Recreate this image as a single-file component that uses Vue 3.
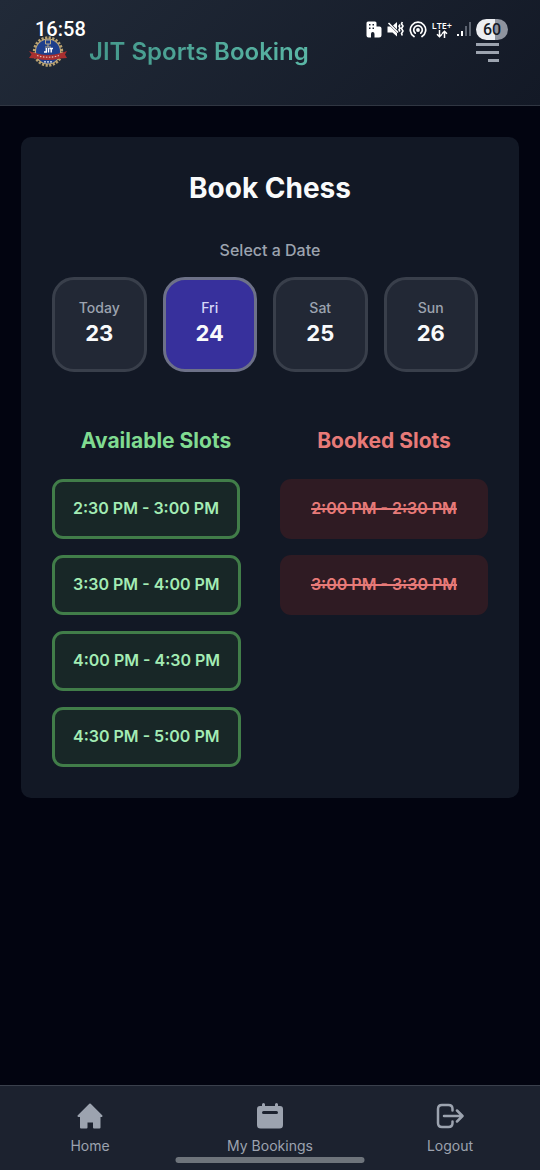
<script setup>
import { ref } from 'vue'

const dates = [
  { label: 'Today', day: 23 },
  { label: 'Fri', day: 24 },
  { label: 'Sat', day: 25 },
  { label: 'Sun', day: 26 },
]
const selected = ref(24)
const available = ['2:30 PM - 3:00 PM', '3:30 PM - 4:00 PM', '4:00 PM - 4:30 PM', '4:30 PM - 5:00 PM']
const booked = ['2:00 PM - 2:30 PM', '3:00 PM - 3:30 PM']
</script>

<template>
  <div class="app">
    <div class="status">
      <span class="clock">16:58</span>
      <div class="status-icons">
        <svg width="16" height="17" viewBox="0 0 16 17" aria-hidden="true">
          <path fill="#fff" fill-rule="evenodd" d="M2 0.500H9Q10.500 0.500 10.500 2V5.500H13.500Q15.500 5.500 15.500 7.500V14Q15.500 16.500 13 16.500H8.500V13Q8.500 11 6.700 11Q5 11 5 13V16.500H2.500Q0.500 16.500 0.500 14.500V2Q0.500 0.500 2 0.500ZM3 3V4.500H4.500V3ZM6.500 3V4.500H8V3ZM3 6.500V8H4.500V6.500ZM6.500 6.500V8H8V6.500Z" />
        </svg>
        <svg width="17" height="17" viewBox="0 0 17 17" aria-hidden="true">
          <path fill="#fff" d="M0.500 5.500H3.500L10 12V15.500L5.500 11.500H0.500ZM6 4.500L10 1V8.500Z" />
          <path stroke="#fff" stroke-width="1.600" d="M1.500 2L11 11.500" />
          <path fill="none" stroke="#fff" stroke-width="1.600" d="M13 3.500L12 5.200L13 7L12 8.800L13 10.500M15.300 1L14.500 3L16 5L14.500 7.500L16 10L14.500 12.500L15.300 14.500" />
        </svg>
        <svg width="18" height="17" viewBox="0 0 18 17" aria-hidden="true">
          <g fill="none" stroke="#fff" stroke-width="1.700" stroke-linecap="round">
            <path d="M5 15.500A7.700 7.700 0 1 1 13 15.500" />
            <path d="M6.200 12.200A4.300 4.300 0 1 1 11.800 12.200" />
          </g>
          <circle cx="9" cy="9" r="1.900" fill="#fff" />
        </svg>
        <span class="lte">
          <span>LTE+</span>
          <svg width="12" height="8" viewBox="0 0 12 8" aria-hidden="true">
            <path fill="none" stroke="#fff" stroke-width="1.500" d="M3.500 0V6.500M1 4.200L3.500 6.700L6 4.200M8.500 8V1.500M6 3.800L8.500 1.300L11 3.800" />
          </svg>
        </span>
        <svg width="14" height="16" viewBox="0 0 14 16" aria-hidden="true">
          <path fill="#fff" d="M0 13H2V15H0ZM4 10H6V15H4Z" />
          <path fill="#5c6370" d="M8 5H10V15H8ZM12 1H14V15H12Z" />
        </svg>
        <span class="battery">60</span>
      </div>
    </div>

    <header class="top">
      <svg class="logo" width="38" height="34" viewBox="0 0 38 34" aria-hidden="true">
        <circle cx="19" cy="16.500" r="13.700" fill="none" stroke="#b9a271" stroke-width="3" stroke-dasharray="2.200 1.400" />
        <circle cx="19" cy="16.500" r="13" fill="#c3ab78" />
        <circle cx="19" cy="16.500" r="12" fill="#1f3f8c" />
        <path fill="none" stroke="#b7a987" stroke-width="1" d="M16.500 5H21.500V9H16.500ZM19 9V12M16 12H22" />
        <path fill="none" stroke="#fff" stroke-width="1.400" d="M17.300 13V17H15M19.500 13V17.500M20.500 13.500H24M22.200 13.500V17.500" />
        <path fill="#a92f2f" d="M0 16L6 18Q19 22 32 18L38 16L36 19.500L38 23L31 23.500Q19 26.500 7 23.500L0 23L2.500 19.500Z" />
        <path fill="none" stroke="#e8b9b0" stroke-width="1.200" stroke-dasharray="1.500 1.500" d="M8 20.500Q19 24 30 20.500" />
        <path fill="none" stroke="#e5e7eb" stroke-width="1.200" stroke-dasharray="2 1" d="M15 26.800H23" />
      </svg>
      <h1>JIT Sports Booking</h1>
      <button class="menu" type="button" aria-label="Open menu">
        <span></span><span></span><span></span>
      </button>
    </header>

    <main>
      <section class="card">
        <h2>Book Chess</h2>
        <p class="prompt">Select a Date</p>
        <div class="dates">
          <button
            v-for="d in dates"
            :key="d.day"
            type="button"
            class="date"
            :class="{ active: d.day === selected }"
            :aria-pressed="d.day === selected"
            @click="selected = d.day"
          >
            <span>{{ d.label }}</span>
            <strong>{{ d.day }}</strong>
          </button>
        </div>
        <div class="columns">
          <section>
            <h3 class="green">Available Slots</h3>
            <div class="slots">
              <button v-for="s in available" :key="s" type="button" class="slot open">{{ s }}</button>
            </div>
          </section>
          <section>
            <h3 class="red">Booked Slots</h3>
            <div class="slots">
              <div v-for="s in booked" :key="s" class="slot taken">{{ s }}</div>
            </div>
          </section>
        </div>
      </section>
    </main>

    <nav class="bottom">
      <a href="#home">
        <svg width="26" height="26" viewBox="0 0 26 26" aria-hidden="true">
          <path fill="currentColor" stroke="currentColor" stroke-width="2" stroke-linejoin="round" d="M13 1.500L24.500 13H22.500V24.500H17V18.500H9.500V24.500H4V13H1.500Z" />
        </svg>
        <span>Home</span>
      </a>
      <a href="#bookings">
        <svg width="26" height="26" viewBox="0 0 26 26" aria-hidden="true">
          <path fill="currentColor" fill-rule="evenodd" d="M5 1.500Q5 0 6.500 0Q8 0 8 1.500V3H18V1.500Q18 0 19.500 0Q21 0 21 1.500V3H23Q26 3 26 6V22Q26 25.500 22.500 25.500H3.500Q0 25.500 0 22V6Q0 3 3 3H5ZM6.500 8Q5 8 5 9.500Q5 11 6.500 11H19.500Q21 11 21 9.500Q21 8 19.500 8Z" />
        </svg>
        <span>My Bookings</span>
      </a>
      <a href="#logout">
        <svg width="28" height="26" viewBox="0 0 28 26" aria-hidden="true">
          <path fill="none" stroke="currentColor" stroke-width="2.500" stroke-linecap="round" stroke-linejoin="round" d="M16.500 7.500V6Q16.500 2 12.500 2H6Q2 2 2 6V20Q2 24 6 24H12.500Q16.500 24 16.500 20V18.500M8 13H26M21 7.500L26.500 13L21 18.500" />
        </svg>
        <span>Logout</span>
      </a>
    </nav>
    <div class="gesture"></div>
  </div>
</template>

<style>
html,
body {
  background: #020410;
}
</style>

<style scoped>
* {
  box-sizing: border-box;
}
.app {
  position: relative;
  display: flex;
  flex-direction: column;
  min-height: 100vh;
  background: #020410;
  color: #f9fafb;
  font-family: Inter, "Liberation Sans", sans-serif;
}
h1,
h2,
h3,
p {
  margin: 0;
}
button {
  font-family: inherit;
  cursor: pointer;
}
.status {
  position: absolute;
  z-index: 1;
  top: 0;
  left: 0;
  right: 0;
  display: flex;
  align-items: center;
  justify-content: space-between;
  height: 58px;
  padding: 0 32px 0 35px;
}
.clock {
  font: 500 20px/24px Roboto, sans-serif;
  color: #fff;
}
.status-icons {
  display: flex;
  align-items: center;
  gap: 5px;
}
.lte {
  display: flex;
  flex-direction: column;
  align-items: center;
  font: 600 9px/9px "Open Sans", sans-serif;
  color: #fff;
}
.battery {
  width: 32px;
  border-radius: 11px;
  background: linear-gradient(90deg, #eceef2 60%, #8f949f 60%);
  color: #151b28;
  font: 500 16px/21px Roboto, sans-serif;
  text-align: center;
}
.top {
  display: flex;
  align-items: center;
  height: 106px;
  padding: 0 41px 1px 29px;
  border-bottom: 1px solid #303642;
  background: linear-gradient(135deg, #212a38, #131926);
}
.logo {
  flex: none;
}
h1 {
  flex: 1;
  margin-left: 22px;
  font-size: 24px;
  line-height: 32px;
  font-weight: 600;
  color: transparent;
  background: linear-gradient(90deg, #44988b, #5bb8a7 60%);
  background-clip: text;
}
.menu {
  display: flex;
  flex-direction: column;
  align-items: flex-end;
  gap: 5px;
  padding: 0;
  border: 0;
  background: none;
}
.menu span {
  width: 23px;
  height: 3px;
  background: #9ca3af;
}
.menu span:last-child {
  width: 11px;
}
main {
  flex: 1;
  padding: 31px 21px;
}
.card {
  padding: 31px;
  border-radius: 10px;
  background: #121825;
}
h2 {
  font-size: 28px;
  line-height: 40px;
  font-weight: 700;
  text-align: center;
}
.prompt {
  margin-top: 30px;
  font-size: 16px;
  line-height: 24px;
  font-weight: 500;
  text-align: center;
  color: #9ca3af;
}
.dates {
  display: grid;
  grid-template-columns: repeat(4, 1fr);
  gap: 16px;
  padding-right: 10px;
  margin-top: 15px;
}
.date {
  display: flex;
  flex-direction: column;
  align-items: center;
  justify-content: center;
  height: 95px;
  padding: 0 0 4px;
  border: 3px solid #393f4b;
  border-radius: 22px;
  background: #222835;
  color: #9ca3af;
}
.date span {
  font-size: 14px;
  line-height: 20px;
  font-weight: 500;
}
.date strong {
  font-size: 22px;
  line-height: 30px;
  font-weight: 700;
  color: #f9fafb;
}
.date.active {
  border-color: #6d7188;
  background: #37309c;
  color: #d5d8f8;
}
.columns {
  display: grid;
  grid-template-columns: 1fr 1fr;
  gap: 20px;
  margin-top: 53px;
}
h3 {
  font-size: 21px;
  line-height: 32px;
  font-weight: 700;
  text-align: center;
}
.green {
  color: #80db91;
}
.red {
  color: #e77a78;
}
.slots {
  display: flex;
  flex-direction: column;
  gap: 16px;
  margin-top: 22px;
}
.slot {
  height: 60px;
  border-radius: 11px;
  font-size: 16px;
  font-weight: 600;
}
.open {
  align-self: flex-start;
  padding: 0 18px 2px;
  border: 3px solid #417d49;
  background: #182727;
  color: #a3ecb4;
}
.taken {
  line-height: 58px;
  text-align: center;
  text-decoration: line-through 2px;
  background: #2f1b23;
  color: #e77a78;
}
.bottom {
  display: grid;
  grid-template-columns: repeat(3, 1fr);
  height: 85px;
  padding-top: 17px;
  border-top: 1px solid #3a404c;
  background: #1c222f;
}
.bottom a {
  display: flex;
  flex-direction: column;
  align-items: center;
  gap: 7px;
  color: #9ca3af;
  text-decoration: none;
  font-size: 14px;
  line-height: 20px;
}
.gesture {
  position: absolute;
  bottom: 7px;
  left: 50%;
  width: 35%;
  height: 6px;
  border-radius: 3px;
  background: #6e747b;
  transform: translateX(-50%);
}
</style>
